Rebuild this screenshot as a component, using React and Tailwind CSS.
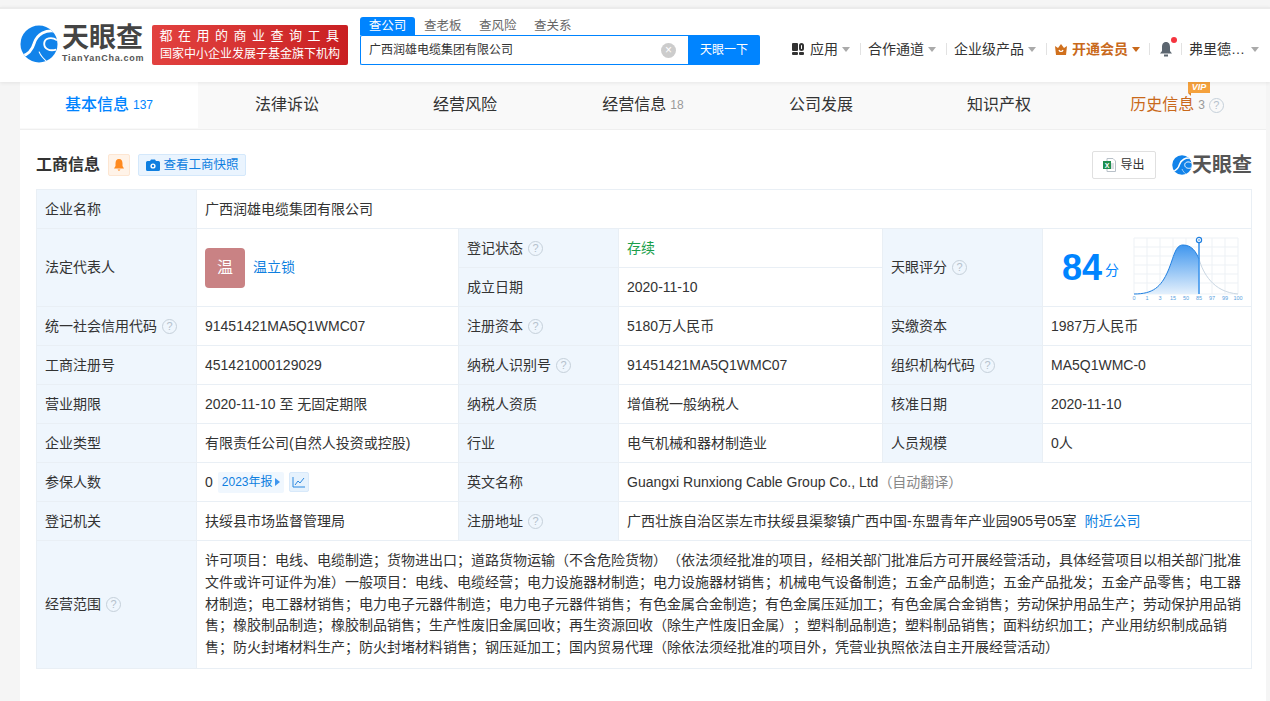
import { useId } from 'react'

const FONT = "font-['Liberation_Sans','Noto_Sans_CJK_SC',sans-serif] [text-spacing-trim:space-all]"

const TABS = [
  { label: '基本信息', count: '137', active: true },
  { label: '法律诉讼' },
  { label: '经营风险' },
  { label: '经营信息', count: '18' },
  { label: '公司发展' },
  { label: '知识产权' },
]

const SCOPE = '许可项目：电线、电缆制造；货物进出口；道路货物运输（不含危险货物）（依法须经批准的项目，经相关部门批准后方可开展经营活动，具体经营项目以相关部门批准文件或许可证件为准）一般项目：电线、电缆经营；电力设施器材制造；电力设施器材销售；机械电气设备制造；五金产品制造；五金产品批发；五金产品零售；电工器材制造；电工器材销售；电力电子元器件制造；电力电子元器件销售；有色金属合金制造；有色金属压延加工；有色金属合金销售；劳动保护用品生产；劳动保护用品销售；橡胶制品制造；橡胶制品销售；生产性废旧金属回收；再生资源回收（除生产性废旧金属）；塑料制品制造；塑料制品销售；面料纺织加工；产业用纺织制成品销售；防火封堵材料生产；防火封堵材料销售；钢压延加工；国内贸易代理（除依法须经批准的项目外，凭营业执照依法自主开展经营活动）'

function Logo({ size }) {
  const id = useId()
  return (
    <svg width={size} height={size} viewBox="0 0 40 40" className="shrink-0">
      <defs>
        <clipPath id={id}><circle cx="20" cy="20" r="19.5" /></clipPath>
      </defs>
      <circle cx="20" cy="20" r="19.5" fill="#1283ea" />
      <g clipPath={`url(#${id})`} fill="none" stroke="#fff">
        <path d="M39 7 C27 4 18 10 15 19 C13 26 8 31 2 33" strokeWidth="3" />
        <path d="M39 16 C33 12 26 14 25.5 19 C25 25 31 28 38 26" strokeWidth="2" />
        <path d="M20 28 C22 33 25 36 30 40" strokeWidth="1.2" />
      </g>
    </svg>
  )
}

function Caret({ className }) {
  return <span className={`inline-block w-0 h-0 border-x-[4px] border-x-transparent border-t-[5px] ${className}`} />
}

function Help({ className = '' }) {
  return (
    <span className={`inline-flex items-center justify-center w-[15px] h-[15px] rounded-full border border-[#c5d0da] text-[11px] leading-none text-[#b5c1cc] ${className}`}>
      ?
    </span>
  )
}

function Sep() {
  return <span className="w-px h-[12px] bg-[#e2e2e2]" />
}

function Header() {
  return (
    <header className="relative z-10 h-[75px] bg-white border-t-2 border-[#ebebeb] shadow-[0_1px_4px_rgba(0,0,0,0.08)] flex items-start">
      <div className="flex items-center ml-[20px] mt-[16px] w-[132px]">
        <Logo size={38} />
        <div className="ml-[4px] flex flex-col">
          <span className="text-[27px] leading-[26px] font-bold text-[#444]">天眼查</span>
          <span className="text-[9px] leading-[10px] font-bold text-[#555] tracking-[0.7px] mt-[2px]">TianYanCha.com</span>
        </div>
      </div>
      <div className="mt-[16px] w-[196px] h-[40px] rounded-[2px] bg-gradient-to-r from-[#e2413f] to-[#c91f22] text-white text-center text-[12px] leading-[18px] pt-[2px]">
        <div className="text-[13px] tracking-[5.5px] pl-[4px] whitespace-nowrap">都在用的商业查询工具</div>
        <div className="whitespace-nowrap">国家中小企业发展子基金旗下机构</div>
      </div>
      <div className="ml-[12px] mt-[8px] w-[400px]">
        <div className="flex h-[18px] text-[12.5px] leading-[18px] text-[#666]">
          <span className="w-[55px] bg-[#0084ff] text-white text-center rounded-t-[3px]">查公司</span>
          <span className="ml-[9px]">查老板</span>
          <span className="ml-[17.5px]">查风险</span>
          <span className="ml-[17.5px]">查关系</span>
        </div>
        <div className="flex h-[30px]">
          <div className="flex-1 flex items-center border border-[#0084ff] rounded-l-[2px] border-r-0 pl-[8px] pr-[12px] text-[12px] text-[#333]">
            <span className="flex-1">广西润雄电缆集团有限公司</span>
            <span className="w-[15px] h-[15px] rounded-full bg-[#ccc] text-white text-[12px] leading-[15px] text-center">×</span>
          </div>
          <div className="w-[72px] bg-[#0084ff] rounded-r-[2px] text-white text-[12px] flex items-center justify-center">天眼一下</div>
        </div>
      </div>
      <nav className="ml-[32px] mt-[31px] flex items-center text-[14px] leading-[18px] text-[#333] whitespace-nowrap">
        <span className="grid grid-cols-2 gap-[1px] w-[12px] h-[12px] mr-[6px]">
          <i className="bg-[#333] rounded-[1px]" />
          <i className="border-2 border-[#333] rounded-full" />
          <i className="bg-[#333] rounded-[1px]" />
          <i className="bg-[#333] rounded-[1px]" />
        </span>
        应用
        <Caret className="border-t-[#aaa] ml-[4px] mr-[10px]" />
        <Sep />
        <span className="ml-[7px]">合作通道</span>
        <Caret className="border-t-[#aaa] ml-[4px] mr-[10px]" />
        <Sep />
        <span className="ml-[7px]">企业级产品</span>
        <Caret className="border-t-[#aaa] ml-[4px] mr-[10px]" />
        <Sep />
        <svg width="14" height="13" viewBox="0 0 14 13" className="ml-[7px] mr-[4px]">
          <path d="M1 3 L4 5 L7 1 L10 5 L13 3 L12 12 L2 12 Z" fill="#d0701d" />
          <path d="M5 7 C5.5 9 8.5 9 9 7" fill="none" stroke="#fff" strokeWidth="1.2" />
        </svg>
        <span className="font-bold text-[#c9691b]">开通会员</span>
        <Caret className="border-t-[#c9691b] ml-[4px] mr-[9px]" />
        <Sep />
        <span className="relative ml-[9px] mr-[8px]">
          <svg width="14" height="16" viewBox="0 0 14 16" className="block">
            <path d="M7 1 C4 1 3 3.5 3 6 L3 10 L1 12.5 L13 12.5 L11 10 L11 6 C11 3.5 10 1 7 1 Z" fill="#5c6670" />
            <rect x="5" y="13.5" width="4" height="2" fill="#5c6670" />
          </svg>
          <i className="absolute -top-[4px] right-[-4px] w-[6px] h-[6px] rounded-full bg-[#f5343f]" />
        </span>
        <Sep />
        <span className="ml-[7px]">弗里德…</span>
        <Caret className="border-t-[#aaa] ml-[6px]" />
      </nav>
    </header>
  )
}

function Tabs() {
  return (
    <div className="flex h-[48px] pb-px text-[16px] border-b border-[#efefef] bg-[#f9f9f9]">
      {TABS.map(t => (
        <div key={t.label} className={`flex-1 flex items-center justify-center ${t.active ? 'bg-white text-[#0084ff] font-medium' : 'text-[#333]'}`}>
          {t.label}
          {t.count && <span className={`ml-[4px] text-[12px] ${t.active ? 'font-normal' : 'text-[#999]'}`}>{t.count}</span>}
        </div>
      ))}
      <div className="relative flex-1 flex items-center justify-center text-[#c9691b]">
        历史信息
        <span className="ml-[4px] text-[12px] text-[#999]">3</span>
        <Help className="ml-[4px]" />
        <span className="absolute top-0 left-[100px] w-[22px] h-[11px] bg-[#f5a13c] text-white text-[9px] leading-[11px] font-bold italic text-center">VIP</span>
        <span className="absolute top-[11px] left-[100px] w-0 h-0 border-t-[3px] border-t-[#d9822b] border-l-[3px] border-l-transparent" />
      </div>
    </div>
  )
}

function Chart() {
  const ticks = ['0', '1', '3', '15', '50', '85', '97', '99', '100']
  const grid = [0, 1, 2, 3, 4, 5, 6, 7, 8]
  return (
    <svg width="112" height="66" viewBox="0 0 112 66" className="block">
      <defs>
        <linearGradient id="bell" x1="0" y1="0" x2="0" y2="1">
          <stop offset="0" stopColor="#3f96ee" />
          <stop offset="1" stopColor="#e4f0fc" />
        </linearGradient>
      </defs>
      {grid.map(i => <line key={i} x1={3 + i * 13} x2={3 + i * 13} y1="3" y2="59" stroke="#edf1f5" />)}
      {[3, 12, 21, 30, 39, 48, 59].map(y => <line key={y} x1="3" x2="107" y1={y} y2={y} stroke="#edf1f5" />)}
      <path d="M68 24 C72 38 82 57 107 59" fill="none" stroke="#c9d6e2" />
      <path d="M3 59 C22 59 30 52 37 36 C43 22 44 10 52 10 C61 10 65 17 68 24 L68 59 Z" fill="url(#bell)" />
      <path d="M3 59 C22 59 30 52 37 36 C43 22 44 10 52 10 C61 10 65 17 68 24" fill="none" stroke="#1f7fe0" strokeWidth="1" />
      <line x1="68" x2="68" y1="8" y2="59" stroke="#3f96ee" strokeWidth="1.6" />
      <circle cx="68" cy="5" r="2.6" fill="#fff" stroke="#1f7fe0" strokeWidth="1.2" />
      <circle cx="68" cy="5" r="0.8" fill="#1f7fe0" />
      {ticks.map((t, i) => (
        <text key={t} x={3 + i * 13} y="65" textAnchor="middle" fontSize="5.5" fill="#5b9fe0">{t}</text>
      ))}
    </svg>
  )
}

function L({ children, help, rowSpan }) {
  return (
    <td rowSpan={rowSpan} className="bg-[#eff6fd] border border-[#e9eff5] px-[8px] text-[#333]">
      <span className="flex items-center">
        {children}
        {help && <Help className="ml-[5px]" />}
      </span>
    </td>
  )
}

function V({ children, rowSpan, colSpan, className = '' }) {
  return (
    <td rowSpan={rowSpan} colSpan={colSpan} className={`border border-[#e9eff5] px-[8px] text-[#333] ${className}`}>
      {children}
    </td>
  )
}

function InfoTable() {
  return (
    <table className="table-fixed border-collapse w-[1215px] text-[14px] leading-[23px]">
      <colgroup>
        <col className="w-[160px]" />
        <col className="w-[262px]" />
        <col className="w-[160px]" />
        <col className="w-[264px]" />
        <col className="w-[160px]" />
        <col className="w-[209px]" />
      </colgroup>
      <tbody>
        <tr className="h-[39px]">
          <L>企业名称</L>
          <V colSpan={5}>广西润雄电缆集团有限公司</V>
        </tr>
        <tr className="h-[39px]">
          <L rowSpan={2}>法定代表人</L>
          <V rowSpan={2}>
            <div className="flex items-center">
              <span className="w-[40px] h-[40px] rounded-[4px] bg-[#c98284] text-white text-[16px] flex items-center justify-center">温</span>
              <span className="ml-[8px] text-[#0f7fe0]">温立锁</span>
            </div>
          </V>
          <L help>登记状态</L>
          <V className="!text-[#1a9e4b]">存续</V>
          <L rowSpan={2} help>天眼评分</L>
          <V rowSpan={2} className="!p-0">
            <div className="flex items-center h-[76px]">
              <span className="ml-[19px] text-[36px] leading-none font-bold text-[#0084ff]">84</span>
              <span className="ml-[3px] mt-[6px] text-[14px] text-[#0084ff]">分</span>
              <span className="ml-[12px]"><Chart /></span>
            </div>
          </V>
        </tr>
        <tr className="h-[39px]">
          <L>成立日期</L>
          <V>2020-11-10</V>
        </tr>
        <tr className="h-[39px]">
          <L help>统一社会信用代码</L>
          <V>91451421MA5Q1WMC07</V>
          <L help>注册资本</L>
          <V>5180万人民币</V>
          <L>实缴资本</L>
          <V>1987万人民币</V>
        </tr>
        <tr className="h-[39px]">
          <L>工商注册号</L>
          <V>451421000129029</V>
          <L help>纳税人识别号</L>
          <V>91451421MA5Q1WMC07</V>
          <L help>组织机构代码</L>
          <V>MA5Q1WMC-0</V>
        </tr>
        <tr className="h-[39px]">
          <L>营业期限</L>
          <V>2020-11-10 至 无固定期限</V>
          <L>纳税人资质</L>
          <V>增值税一般纳税人</V>
          <L>核准日期</L>
          <V>2020-11-10</V>
        </tr>
        <tr className="h-[39px]">
          <L>企业类型</L>
          <V>有限责任公司(自然人投资或控股)</V>
          <L>行业</L>
          <V>电气机械和器材制造业</V>
          <L>人员规模</L>
          <V>0人</V>
        </tr>
        <tr className="h-[39px]">
          <L>参保人数</L>
          <V>
            <div className="flex items-center">
              0
              <span className="ml-[5px] h-[21px] px-[4px] rounded-[2px] bg-[#f0f7fe] text-[#0f7fe0] text-[12px] flex items-center">
                2023年报
                <span className="ml-[2px] w-0 h-0 border-y-[4px] border-y-transparent border-l-[5px] border-l-[#3f96ee]" />
              </span>
              <span className="ml-[5px] w-[20px] h-[20px] rounded-[2px] bg-[#e6f2fd] border border-[#d8e9fa] flex items-center justify-center">
                <svg width="14" height="12" viewBox="0 0 14 12" fill="none" stroke="#2b88e0">
                  <path d="M1 1 V11 H13" />
                  <path d="M3 9 L6 5 L8 7 L12 2" />
                </svg>
              </span>
            </div>
          </V>
          <L>英文名称</L>
          <V colSpan={3}>
            Guangxi Runxiong Cable Group Co., Ltd<span className="text-[#888]">（自动翻译）</span>
          </V>
        </tr>
        <tr className="h-[39px]">
          <L>登记机关</L>
          <V>扶绥县市场监督管理局</V>
          <L help>注册地址</L>
          <V colSpan={3}>
            广西壮族自治区崇左市扶绥县渠黎镇广西中国-东盟青年产业园905号05室
            <span className="ml-[8px] text-[#0f7fe0]">附近公司</span>
          </V>
        </tr>
        <tr className="h-[128px]">
          <L help>经营范围</L>
          <V colSpan={5} className="!leading-[21.75px] py-[4px]">{SCOPE}</V>
        </tr>
      </tbody>
    </table>
  )
}

export default function App() {
  return (
    <div className={`${FONT} h-[701px] overflow-hidden bg-[#f5f5f5] pt-[7px]`}>
      <Header />
      <div className="ml-[20px] mr-[4px] h-[620px] bg-white">
        <Tabs />
        <div className="px-[16px]">
          <div className="flex items-center h-[59px] pt-[11px]">
            <h2 className="text-[16px] font-bold text-[#333]">工商信息</h2>
            <span className="ml-[8px] w-[22px] h-[22px] rounded-[2px] bg-[#fff3e8] border border-[#fde6d2] flex items-center justify-center">
              <svg width="10" height="12" viewBox="0 0 10 12">
                <path d="M5 0 C2.5 0 1.5 2 1.5 4.5 L1.5 7 L0 9.5 L10 9.5 L8.5 7 L8.5 4.5 C8.5 2 7.5 0 5 0 Z M3.5 10.5 H6.5 L5 12 Z" fill="#ff8a1f" />
              </svg>
            </span>
            <span className="ml-[8px] h-[22px] w-[108px] rounded-[2px] bg-[#eaf4fe] border border-[#d4e8fb] text-[#0f7fe0] text-[12.5px] flex items-center justify-center">
              <svg width="14" height="12" viewBox="0 0 14 12" className="mr-[4px]">
                <path d="M1.5 2 H4 L5 0.5 H9 L10 2 H12.5 Q14 2 14 3.5 V10.5 Q14 12 12.5 12 H1.5 Q0 12 0 10.5 V3.5 Q0 2 1.5 2 Z" fill="#0f7fe0" />
                <circle cx="7" cy="7" r="2.6" fill="#fff" />
                <circle cx="7" cy="7" r="1.2" fill="#0f7fe0" />
              </svg>
              查看工商快照
            </span>
            <span className="ml-auto h-[28px] w-[64px] rounded-[2px] border border-[#e0e0e0] text-[12px] text-[#333] flex items-center justify-center">
              <svg width="13" height="14" viewBox="0 0 13 14" className="mr-[4px]">
                <path d="M4 0.5 H10 L12.5 3 V13.5 H4 Z" fill="#fff" stroke="#b8c0c8" />
                <path d="M8 6 H11 M8 8 H11 M8 10 H11" stroke="#b8c0c8" />
                <rect x="0" y="3" width="8" height="8" fill="#1e8e4e" />
                <text x="4" y="9.5" textAnchor="middle" fontSize="7" fontWeight="bold" fill="#fff">X</text>
              </svg>
              导出
            </span>
            <span className="ml-[16px] mr-[-2px] flex items-center">
              <Logo size={20} />
              <span className="text-[20px] leading-[20px] font-bold text-[#555]">天眼查</span>
            </span>
          </div>
          <InfoTable />
        </div>
      </div>
    </div>
  )
}
